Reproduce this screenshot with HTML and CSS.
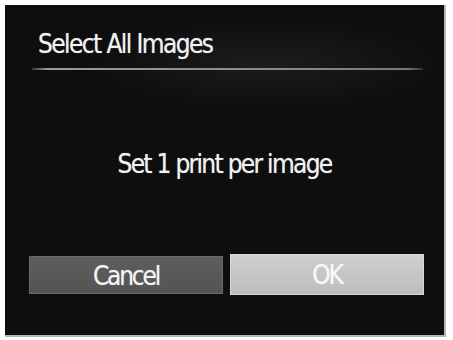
FILE: index.html
```html
<!DOCTYPE html>
<html>
<head>
<meta charset="utf-8">
<link rel="stylesheet" href="styles.css">
</head>
<body>
<div class="screen">
  <div class="title">Select All Images</div>
  <div class="rule"></div>
  <div class="message">Set 1 print per image</div>
  <div class="buttons">
    <div class="btn cancel">Cancel</div>
    <div class="btn ok">OK</div>
  </div>
</div>
</body>
</html>
```

FILE: styles.css
```css
html, body {
  margin: 0;
  padding: 0;
  background: #ffffff;
}
body {
  width: 453px;
  height: 340px;
  overflow: hidden;
}
.screen {
  margin: 5px 0 0 5px;
  width: 441px;
  height: 332px;
  box-sizing: border-box;
  background: radial-gradient(ellipse 60% 20% at 60% 18%, #1c1c1c 0%, #0e0e0e 70%), #0e0e0e;
  background-color: #0e0e0e;
  border-right: 2px solid #b5b5b5;
  border-bottom: 2px solid #b5b5b5;
  display: flex;
  flex-direction: column;
  font-family: "DejaVu Sans Condensed", "DejaVu Sans", sans-serif;
  color: #f2f2f2;
  text-shadow: 0 0 1px rgba(255,255,255,0.5);
}
.title {
  padding: 23px 0 0 33px;
  font-size: 26px;
  letter-spacing: -1.6px;
  line-height: 32px;
  height: 40px;
}
.rule {
  margin: 0 21px 0 27px;
  height: 2px;
  background: linear-gradient(90deg, rgba(150,150,150,0.3) 0%, #9a9a9a 4%, #8a8a8a 60%, #7a7a7a 96%, rgba(120,120,120,0.3) 100%);
}
.message {
  margin-top: 79px;
  text-align: center;
  font-size: 26px;
  letter-spacing: -1.7px;
  line-height: 30px;
}
.buttons {
  margin-top: 75px;
  padding: 0 20px 0 24px;
  display: flex;
  gap: 7px;
  align-items: center;
}
.btn {
  flex: 1;
  text-align: center;
  font-size: 26px;
  letter-spacing: -2.2px;
  box-sizing: border-box;
}
.cancel {
  height: 38px;
  line-height: 38px;
  background: linear-gradient(180deg, #5e5e5e 0%, #545454 100%);
  border: 1px solid #6a6a6a;
  color: #f4f4f4;
}
.ok {
  height: 41px;
  line-height: 41px;
  background: linear-gradient(180deg, #cfcfcf 0%, #bdbdbd 100%);
  border: 1px solid #d8d8d8;
  color: #f8f8f8;
}
```
